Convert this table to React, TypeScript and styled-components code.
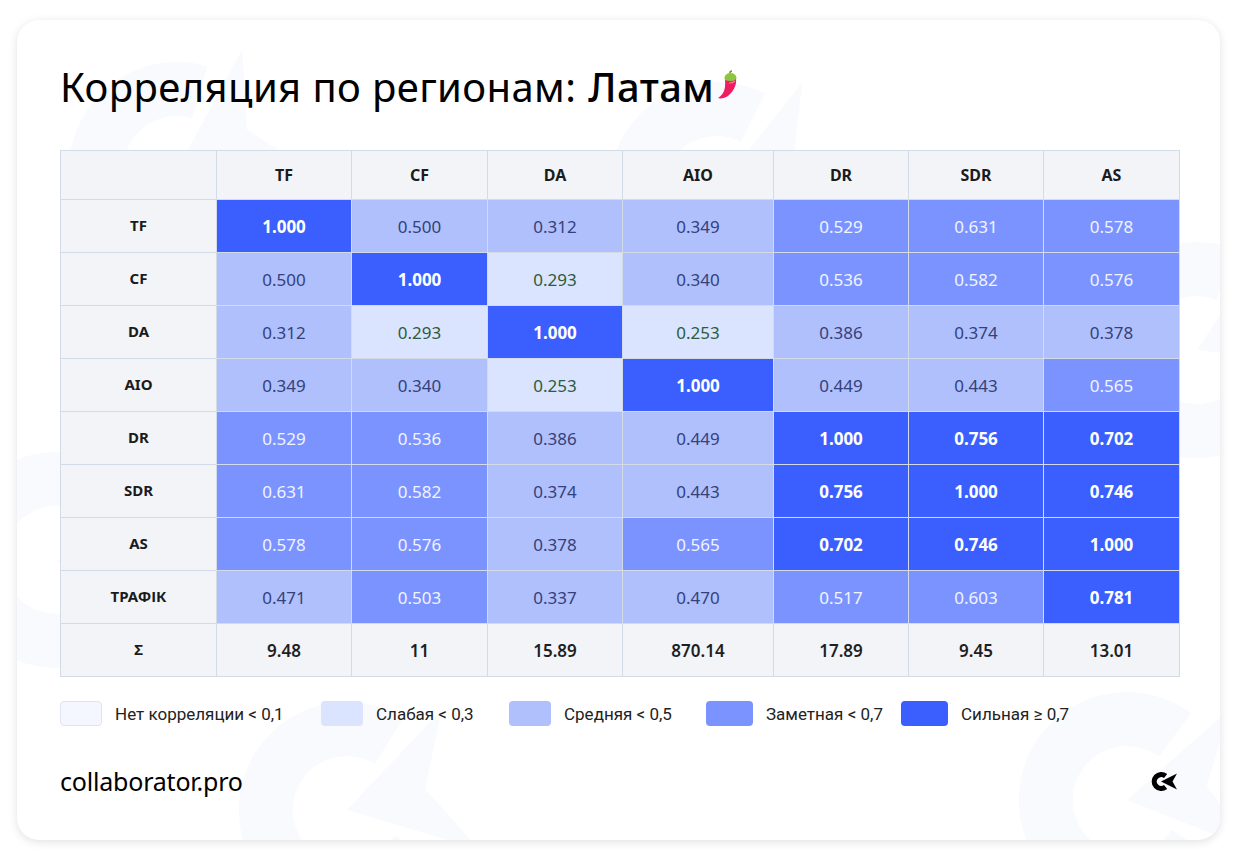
import React from 'react';
import styled, { createGlobalStyle } from 'styled-components';

const GlobalStyle = createGlobalStyle`
    html, body {
        margin: 0;
        padding: 0;
        background: #ffffff;
    }
    * {
        box-sizing: border-box;
    }
`;

const Page = styled.div`
    width: 1240px;
    height: 860px;
    padding: 20px 20px 20px 17px;
`;

const Card = styled.div`
    position: relative;
    width: 1203px;
    height: 820px;
    border-radius: 22px;
    background: #ffffff;
    box-shadow: 0 2px 10px rgba(0, 0, 0, 0.12);
    overflow: hidden;
`;

const Watermark = styled.svg`
    position: absolute;
    inset: 0;
    width: 100%;
    height: 100%;
    z-index: 0;
`;

const Content = styled.div`
    position: relative;
    z-index: 1;
    display: flex;
    flex-direction: column;
    padding: 43px 41px 0 43px;
`;

const Title = styled.h1`
    margin: 0;
    display: flex;
    align-items: center;
    font-family: 'Noto Sans', 'Open Sans', sans-serif;
    font-weight: 400;
    font-size: 40px;
    line-height: 48px;
    color: #000;
    letter-spacing: 0.4px;
`;

const Region = styled.span`
    font-weight: 500;
    margin-left: 12px;
`;

const Chili = styled.svg`
    width: 22px;
    height: 30px;
    margin-left: 3px;
    margin-top: -4px;
`;

const Table = styled.table`
    margin-top: 39px;
    width: 1119px;
    border-collapse: collapse;
    table-layout: fixed;
    font-family: 'Noto Sans', 'Open Sans', sans-serif;
`;

const HeadCell = styled.th`
    height: 49px;
    background: #f2f4f8;
    border: 1.5px solid #d3dbe7;
    font-size: 16px;
    font-weight: 700;
    color: #1b1b1b;
    text-align: center;
`;

const RowLabel = styled.th`
    height: 53px;
    background: #f2f4f8;
    border: 1.5px solid #d3dbe7;
    font-size: 15px;
    font-weight: 700;
    color: #1b1b1b;
    text-align: center;
    padding-bottom: 4px;
`;

type Level = 'none' | 'weak' | 'medium' | 'notable' | 'strong';

const levelBg: Record<Level, string> = {
    none: '#f4f7ff',
    weak: '#dbe4fe',
    medium: '#b0c0fd',
    notable: '#7b93ff',
    strong: '#3a5ffe',
};

const levelText: Record<Level, string> = {
    none: '#3b4a6b',
    weak: '#2d5b3c',
    medium: '#34417a',
    notable: '#f1f4ff',
    strong: '#ffffff',
};

const ValueCell = styled.td<{ $level: Level }>`
    height: 53px;
    background: ${p => levelBg[p.$level]};
    border: 1.5px solid #d3dbe7;
    font-size: 17px;
    font-weight: ${p => (p.$level === 'strong' ? 700 : 400)};
    color: ${p => levelText[p.$level]};
    text-align: center;
`;

const SumCell = styled.td`
    height: 53px;
    background: #f2f4f8;
    border: 1.5px solid #d3dbe7;
    font-size: 17px;
    font-weight: 600;
    color: #1f1f1f;
    text-align: center;
`;

const Legend = styled.div`
    margin-top: 24px;
    display: flex;
    align-items: center;
    font-family: 'Roboto', 'Liberation Sans', sans-serif;
    font-size: 17px;
    color: #222;
`;

const LegendItem = styled.div<{ $width: number }>`
    display: flex;
    align-items: center;
    width: ${p => p.$width}px;
`;

const Swatch = styled.span<{ $level: Level; $size: number }>`
    width: ${p => p.$size}px;
    height: 25px;
    border-radius: 4px;
    background: ${p => levelBg[p.$level]};
    border: 1px solid ${p => (p.$level === 'none' ? '#dfe5f0' : 'transparent')};
    margin-right: 13px;
    flex-shrink: 0;
`;

const Footer = styled.div`
    margin-top: 39px;
    display: flex;
    align-items: center;
    justify-content: space-between;
`;

const Brand = styled.div`
    font-family: 'Noto Sans', 'Open Sans', sans-serif;
    font-size: 25px;
    line-height: 32px;
    color: #000;
    letter-spacing: -0.2px;
`;

const Logo = styled.svg`
    width: 28px;
    height: 21px;
    margin-right: 1px;
`;

const columns = ['TF', 'CF', 'DA', 'AIO', 'DR', 'SDR', 'AS'];
const widths = [156, 135, 136, 135, 151, 135, 135, 136];

const rows: { label: string; values: number[] }[] = [
    { label: 'TF', values: [1, 0.5, 0.312, 0.349, 0.529, 0.631, 0.578] },
    { label: 'CF', values: [0.5, 1, 0.293, 0.34, 0.536, 0.582, 0.576] },
    { label: 'DA', values: [0.312, 0.293, 1, 0.253, 0.386, 0.374, 0.378] },
    { label: 'AIO', values: [0.349, 0.34, 0.253, 1, 0.449, 0.443, 0.565] },
    { label: 'DR', values: [0.529, 0.536, 0.386, 0.449, 1, 0.756, 0.702] },
    { label: 'SDR', values: [0.631, 0.582, 0.374, 0.443, 0.756, 1, 0.746] },
    { label: 'AS', values: [0.578, 0.576, 0.378, 0.565, 0.702, 0.746, 1] },
    { label: 'ТРАФІК', values: [0.471, 0.503, 0.337, 0.47, 0.517, 0.603, 0.781] },
];

const sums = ['9.48', '11', '15.89', '870.14', '17.89', '9.45', '13.01'];

const legend: { level: Level; text: string; width: number; size: number }[] = [
    { level: 'none', text: 'Нет корреляции < 0,1', width: 261, size: 42 },
    { level: 'weak', text: 'Слабая < 0,3', width: 188, size: 42 },
    { level: 'medium', text: 'Средняя < 0,5', width: 197, size: 42 },
    { level: 'notable', text: 'Заметная < 0,7', width: 195, size: 47 },
    { level: 'strong', text: 'Сильная ≥ 0,7', width: 200, size: 47 },
];

function levelOf(v: number): Level {
    if (v < 0.1) return 'none';
    if (v < 0.3) return 'weak';
    if (v <= 0.5) return 'medium';
    if (v < 0.7) return 'notable';
    return 'strong';
}

// big faded brand marks behind the content
const marks = [
    { x: 160, y: 150, r: -30 },
    { x: 700, y: 170, r: -20 },
    { x: 1180, y: 330, r: -25 },
    { x: 40, y: 540, r: 10 },
    { x: 330, y: 790, r: -15 },
    { x: 1110, y: 780, r: -10 },
];

const BrandMark = ({ x, y, r }: { x: number; y: number; r: number }) => (
    <g transform={`translate(${x} ${y}) rotate(${r}) scale(9)`}>
        <path d="M6.5 -6.2 A9 9 0 1 0 6.5 6.2" fill="none" stroke="#f9fafd" strokeWidth="6" />
        <path d="M0 0 L13 -8 L9 0 L13 8 Z" fill="#f9fafd" />
    </g>
);

export default function App() {
    return (
        <Page>
            <GlobalStyle />
            <Card>
                <Watermark viewBox="0 0 1203 820" preserveAspectRatio="none">
                    {marks.map((m, i) => (
                        <BrandMark key={i} {...m} />
                    ))}
                </Watermark>
                <Content>
                    <Title>
                        Корреляция по регионам:
                        <Region>Латам</Region>
                        <Chili viewBox="0 0 22 30">
                            <path d="M13 3 C13 1.5 14 1 15 1" stroke="#6a9a2a" strokeWidth="1.6" fill="none" />
                            <ellipse cx="13.5" cy="8" rx="6" ry="5" fill="#8cc63f" />
                            <path d="M8 10 C12 12 18 11 19 9 C20 15 16 22 11 26 C8 28 4 29 1 28 C6 25 9 20 8 10 Z" fill="#ee1d62" />
                            <path d="M12 13 C15 13 17 12 18 11" stroke="#ff6f9a" strokeWidth="1.2" fill="none" />
                        </Chili>
                    </Title>

                    <Table>
                        <colgroup>
                            {widths.map((w, i) => (
                                <col key={i} style={{ width: w }} />
                            ))}
                        </colgroup>
                        <thead>
                            <tr>
                                <HeadCell />
                                {columns.map(c => (
                                    <HeadCell key={c}>{c}</HeadCell>
                                ))}
                            </tr>
                        </thead>
                        <tbody>
                            {rows.map(row => (
                                <tr key={row.label}>
                                    <RowLabel>{row.label}</RowLabel>
                                    {row.values.map((v, i) => (
                                        <ValueCell key={i} $level={levelOf(v)}>
                                            {v.toFixed(3)}
                                        </ValueCell>
                                    ))}
                                </tr>
                            ))}
                            <tr>
                                <RowLabel>Σ</RowLabel>
                                {sums.map((s, i) => (
                                    <SumCell key={i}>{s}</SumCell>
                                ))}
                            </tr>
                        </tbody>
                    </Table>

                    <Legend>
                        {legend.map(item => (
                            <LegendItem key={item.level} $width={item.width}>
                                <Swatch $level={item.level} $size={item.size} />
                                {item.text}
                            </LegendItem>
                        ))}
                    </Legend>

                    <Footer>
                        <Brand>collaborator.pro</Brand>
                        <Logo viewBox="0 0 28 21">
                            <path d="M15.6 5 A7 7 0 1 0 15.6 16" fill="none" stroke="#000" strokeWidth="5.2" />
                            <path d="M11 10.5 L27 2.5 L22.5 10.5 L27 18.5 Z" fill="#000" />
                        </Logo>
                    </Footer>
                </Content>
            </Card>
        </Page>
    );
}
